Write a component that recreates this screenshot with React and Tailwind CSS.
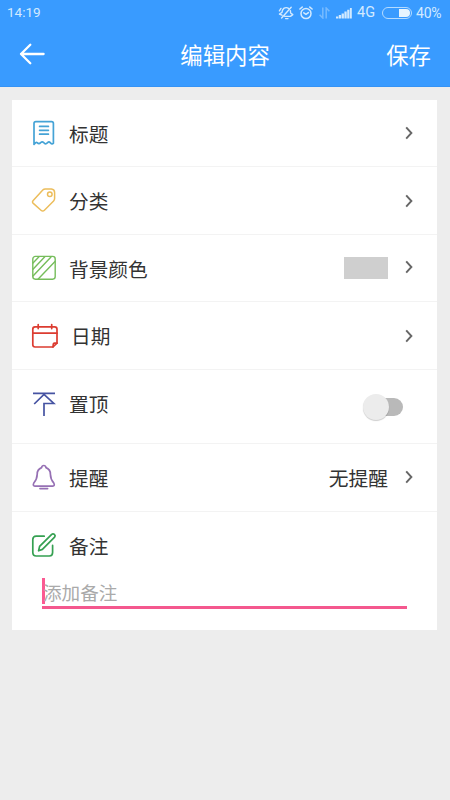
import React, { useState } from 'react';

const TitleIcon = () => (
    <svg viewBox="0 0 26 26" className="w-[26px] h-[26px]" fill="none" stroke="#45a3d6" strokeWidth="1.7" strokeLinejoin="round" strokeLinecap="round">
        <path d="M3 23.2V3.6Q3 1.7 4.8 1.7H20.6Q22.4 1.7 22.4 3.6V23.2Q21 24.8 19.2 22.6Q18 21.2 16.6 22.6Q14.4 25 12.7 22.6Q11.3 21.2 9.6 22.6Q8 24.6 6.2 22.6Q5 21.8 3 24.4Z" />
        <path d="M8.6 6.4H17.4M8.6 10.3H17.4M8.6 14.2H17.4" />
    </svg>
);

const TagIcon = () => (
    <svg viewBox="0 0 26 26" className="w-[26px] h-[26px] mb-px" fill="none" stroke="#ecbd5b" strokeWidth="1.5" strokeLinejoin="round">
        <path d="M11.8 3Q12.8 1.9 14.2 1.9L20.4 2Q23.6 2.4 23.6 5.6V11.6Q23.6 13 22.6 14L13.4 23.2Q11.8 24.8 10 23.2L2.3 16.4Q0.8 15 2.2 13.4Z" />
        <circle cx="18.8" cy="7.2" r="2.3" />
    </svg>
);

const PatternIcon = () => (
    <svg viewBox="0 0 26 26" className="w-[26px] h-[26px]" fill="none" stroke="#76bd5b" strokeWidth="1.4" strokeLinecap="round">
        <rect x="1.8" y="1.4" width="22.4" height="22.8" rx="2.6" />
        <path d="M2 8L8 1.8M2 14.2L13.8 1.8M2 21L20 1.9M7.2 24L24 6.6" />
    </svg>
);

const CalendarIcon = () => (
    <svg viewBox="0 0 28 26" className="w-[28px] h-[26px]" fill="none" stroke="#dc3c31" strokeWidth="1.7" strokeLinejoin="round" strokeLinecap="round">
        <path d="M4 3.9H23.6Q26 3.9 26 6.3V20.2L22 24H4Q1.8 24 1.8 21.8V6.3Q1.8 3.9 4 3.9Z" />
        <path d="M1.8 10.2H26M7.2 1.6V5.6M20.7 1.6V5.6M26 20.2H23.4Q22.4 20.2 22.3 21.2L22 24" />
    </svg>
);

const TopIcon = () => (
    <svg viewBox="0 0 26 26" className="w-[26px] h-[26px]" fill="none" stroke="#4653a2" strokeWidth="1.7">
        <path d="M2 2.4H24M3.2 13L13 3.4L22.8 12.5H13V25" />
    </svg>
);

const BellIcon = () => (
    <svg viewBox="0 0 26 26" className="w-[26px] h-[26px] mb-0.5" fill="none" stroke="#9670b4" strokeWidth="1.7" strokeLinejoin="round" strokeLinecap="round">
        <path d="M10.6 3.6Q11 1.5 12.8 1.5Q14.6 1.5 15 3.6Q19.4 5.2 19.4 10.2Q19.5 15.2 22.8 19Q24.2 22 21.6 22.2H4Q1.4 22 2.8 19Q6.1 15.2 6.2 10.2Q6.2 5.2 10.6 3.6Z" />
        <path d="M9 24.6H16.6" />
    </svg>
);

const EditIcon = () => (
    <svg viewBox="0 0 26 26" className="w-[26px] h-[26px]" fill="none" stroke="#35a051" strokeWidth="1.7" strokeLinejoin="round" strokeLinecap="round">
        <path d="M13.2 4.2H5.2Q1.8 4.2 1.8 7.4V20.6Q1.8 24 5.2 24H18.4Q21.6 24 21.6 20.6V13.4" />
        <path d="M7.6 18.8L8.6 14.4L20.7 2.3Q22 1.2 23.4 2.4Q24.8 3.8 23.6 5.2L11.4 17.4Z" />
    </svg>
);

const Chevron = ({ className = '' }) => (
    <svg viewBox="0 0 8 14" className={`w-2 h-3.5 ${className}`} fill="none" stroke="#666" strokeWidth="1.9">
        <path d="M1.2 1.4L6.4 7L1.2 12.6" />
    </svg>
);

const StatusBar = () => (
    <div className="h-[26px] flex items-center pl-[7px] pr-2 text-[13.5px] leading-none text-[#d3eaff] font-['Roboto','Noto_Sans',sans-serif]">
        <span>14:19</span>
        <div className="ml-auto flex items-center">
            {/* muted bell */}
            <svg viewBox="0 0 16 16" className="w-4 h-4 mr-[5px]" fill="none" stroke="currentColor" strokeWidth="1.4" strokeLinecap="round" strokeLinejoin="round">
                <path d="M10.6 3.4Q8.2 1.9 5.8 3.4Q4.2 4.8 4 7.4L1.4 9L4 10.2M12.4 5.6L12.6 8L14.8 9.6L12.4 11.4H6.8M7.6 13.6H10M13.2 2.2L3.6 13M1.4 5.8L3 3.4" />
            </svg>
            {/* alarm clock */}
            <svg viewBox="0 0 14 14" className="w-3.5 h-3.5 mr-[6px]" fill="none" stroke="currentColor" strokeWidth="1.5" strokeLinecap="round">
                <circle cx="7" cy="7.6" r="5" />
                <path d="M4.8 6.8L7 8.4L9.4 6.6M0.9 3L3.2 1.1M13.1 3L10.8 1.1" />
            </svg>
            {/* data arrows */}
            <svg viewBox="0 0 11 12" className="w-[11px] h-3 mr-[6px] opacity-40" fill="none" stroke="currentColor" strokeWidth="1.5">
                <path d="M3.8 0.5V11L0.6 7.8M7.2 11.5V1L10.4 4.2" />
            </svg>
            <svg viewBox="0 0 16 12" className="w-4 h-3 mr-[5px]" fill="currentColor">
                <path d="M0 9.5H2.3V11.5H0ZM2.8 8H5.1V11.5H2.8ZM5.6 6.4H7.9V11.5H5.6ZM8.4 4.6H10.7V11.5H8.4ZM11.2 2.8H13.4V11.5H11.2ZM13.9 1H15.8V11.5H13.9Z" />
            </svg>
            <span className="mr-1.5 w-[19px] pt-px text-[14.5px]">4G</span>
            <div className="w-[30px] h-[12px] mr-1 rounded-full border border-[#b5dbff] p-px flex justify-end">
                <div className="w-[11px] rounded-r-full bg-[#e8f5ff]" />
            </div>
            <span className="w-[26px] whitespace-nowrap text-[14px] tracking-[-0.2px]">40%</span>
        </div>
    </div>
);

const Row = ({ icon, label, className = '', labelClass = 'ml-3', children }) => (
    <div className={`flex items-center pl-[19px] pr-6 border-b border-[#f3f3f3] ${className}`}>
        {icon}
        <span className={`pt-px ${labelClass}`}>{label}</span>
        <div className="ml-auto flex items-center">{children}</div>
    </div>
);

const App = () => {
    const [pinned, setPinned] = useState(false);
    const [note, setNote] = useState('');

    return (
        <div className="w-[450px] h-[800px] bg-[#ededed] overflow-hidden text-[#333] font-['Noto_Sans_CJK_SC',sans-serif]">
            <header className="h-[87px] bg-[#399bff] border-b border-[#3593f5] text-white">
                <StatusBar />
                <div className="h-[56px] flex items-center justify-between pl-[19px] pr-[19px] text-[22.4px] leading-none">
                    <button className="w-[45px]">
                        <svg viewBox="0 0 26 22" className="w-[26px] h-[22px]" fill="none" stroke="currentColor" strokeWidth="2.3" strokeLinecap="round" strokeLinejoin="round">
                            <path d="M11.3 1.8L2 11L11.3 20.2M2 11H24.6" />
                        </svg>
                    </button>
                    <h1>编辑内容</h1>
                    <button>保存</button>
                </div>
            </header>

            <main className="mt-[13px] ml-3 w-[425px] h-[530px] bg-white text-[19.7px] leading-none">
                <Row icon={<TitleIcon />} label="标题" className="h-[67px]">
                    <Chevron />
                </Row>
                <Row icon={<TagIcon />} label="分类" className="h-[68px]">
                    <Chevron />
                </Row>
                <Row icon={<PatternIcon />} label="背景颜色" className="h-[67px]">
                    <div className="w-11 h-[22px] mr-[17px] bg-[#cfcfcf]" />
                    <Chevron className="mb-[3px]" />
                </Row>
                <Row icon={<CalendarIcon />} label="日期" className="h-[68px]">
                    <Chevron />
                </Row>
                <div className="flex items-center h-[74px] pl-[19px] pr-[34px] border-b border-[#f3f3f3]">
                    <div className="flex items-center pb-1.5">
                        <TopIcon />
                        <span className="ml-3 pt-px">置顶</span>
                    </div>
                    <button
                        onClick={() => setPinned(!pinned)}
                        className={`ml-auto flex items-center w-[38px] h-[18px] rounded-full bg-[#b9b9b9] ${pinned ? 'justify-end' : ''}`}
                    >
                        <span className="w-[26px] h-[26px] -ml-[2px] shrink-0 rounded-full bg-[#ececec] shadow-[0_1px_1px_rgba(0,0,0,0.2)]" />
                    </button>
                </div>
                <Row icon={<BellIcon />} label="提醒" className="h-[68px]">
                    <span className="mr-[17px] pt-px text-[19.8px]">无提醒</span>
                    <Chevron />
                </Row>
                <div className="h-[118px] pt-5 pl-[19px] pr-[30px]">
                    <div className="flex items-center">
                        <EditIcon />
                        <span className="ml-3 pt-px">备注</span>
                    </div>
                    <div className="mt-5 ml-[11px] h-[31px] border-b-[3px] border-[#f4588e] flex items-start">
                        <div className="w-[3px] h-[26px] shrink-0 bg-[#fb5a92]" />
                        <input
                            value={note}
                            onChange={(e) => setNote(e.target.value)}
                            placeholder="添加备注"
                            className="w-full h-[26px] -ml-0.5 text-[18.6px] placeholder:text-[#aaa] focus:outline-none"
                        />
                    </div>
                </div>
            </main>
        </div>
    );
};

export default App;
